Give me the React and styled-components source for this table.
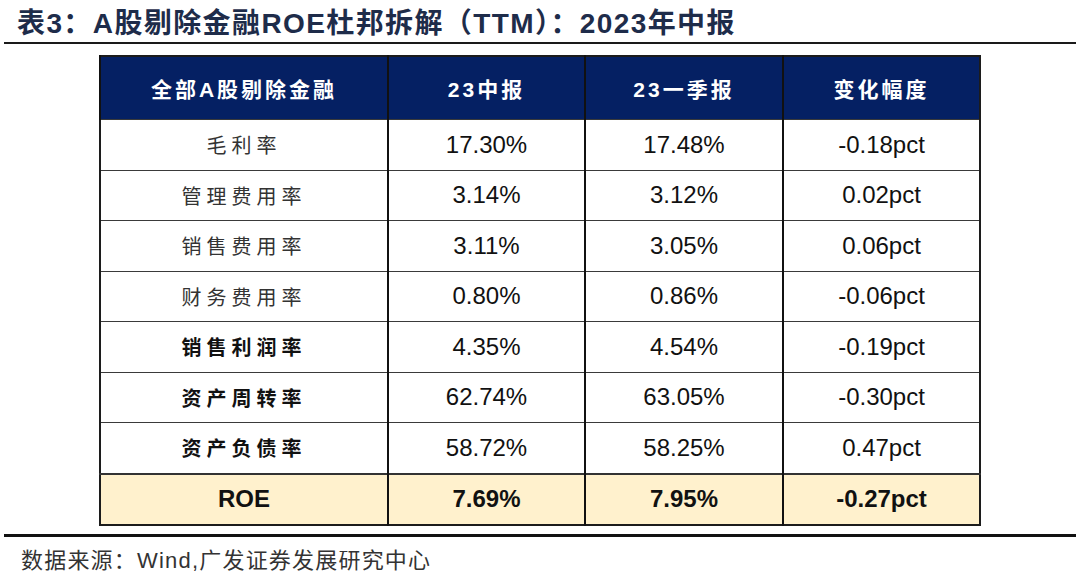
import React from "react";
import styled, { createGlobalStyle } from "styled-components";

const GlobalStyle = createGlobalStyle`
  html, body {
    margin: 0;
    padding: 0;
    background: #ffffff;
  }
  body {
    font-family: "Liberation Sans", "Noto Sans CJK SC", sans-serif;
  }
`;

const Page = styled.div`
  width: 1080px;
  height: 579px;
  display: flex;
  flex-direction: column;
  overflow: hidden;
`;

const Title = styled.div`
  height: 42px;
  padding-left: 17px;
  display: flex;
  align-items: center;
  font-family: "Liberation Sans", "Noto Sans CJK SC", sans-serif;
  font-size: 28px;
  font-weight: 700;
  color: #1e2c4a;
  letter-spacing: 1.4px;
  white-space: nowrap;
`;

const Rule = styled.div`
  margin: 0 4px;
  height: 2px;
  background: #1a1a1a;
`;

const TableWrap = styled.div`
  padding: 11px 0 0 99px;
`;

const Table = styled.table`
  border-collapse: collapse;
  width: 880px;
  table-layout: fixed;
  border: 2px solid #1c1c1c;
`;

const HeadCell = styled.th`
  height: 62px;
  padding: 0;
  background: #052063;
  color: #ffffff;
  font-family: "Liberation Sans", "Noto Sans CJK SC", sans-serif;
  font-size: 21px;
  font-weight: 700;
  letter-spacing: 3px;
  text-align: center;
  border-left: 2px solid #111;
`;

const Row = styled.tr`
  background: ${(p) => (p.$highlight ? "#fff1cd" : "#ffffff")};
  border-top: ${(p) => (p.$highlight ? "2px solid #333" : "1.5px solid #3a3a3a")};
`;

const Label = styled.td`
  height: 49.5px;
  padding: 0;
  text-align: center;
  font-family: "Noto Sans CJK SC", sans-serif;
  font-size: 20px;
  letter-spacing: 5px;
  font-weight: ${(p) => (p.$bold ? 700 : 400)};
  color: ${(p) => (p.$bold ? "#111" : "#333")};
`;

const Value = styled.td`
  height: 49.5px;
  padding: 0;
  text-align: center;
  font-family: "Liberation Sans", Arial, sans-serif;
  font-size: 24px;
  font-weight: ${(p) => (p.$bold ? 700 : 400)};
  color: #111;
  border-left: 2px solid #111;
`;

const RoeLabel = styled(Label)`
  font-family: "Liberation Sans", Arial, sans-serif;
  font-size: 24px;
  letter-spacing: 0;
`;

const Footer = styled.div`
  margin: 8px 4px 0;
  border-top: 3px solid #111;
  padding: 5px 0 0 17px;
  font-family: "Liberation Sans", "Noto Sans CJK SC", sans-serif;
  font-size: 22px;
  letter-spacing: 1.2px;
  color: #333;
  white-space: nowrap;
`;

const rows = [
  { name: "毛利率", a: "17.30%", b: "17.48%", c: "-0.18pct" },
  { name: "管理费用率", a: "3.14%", b: "3.12%", c: "0.02pct" },
  { name: "销售费用率", a: "3.11%", b: "3.05%", c: "0.06pct" },
  { name: "财务费用率", a: "0.80%", b: "0.86%", c: "-0.06pct" },
  { name: "销售利润率", a: "4.35%", b: "4.54%", c: "-0.19pct", bold: true },
  { name: "资产周转率", a: "62.74%", b: "63.05%", c: "-0.30pct", bold: true },
  { name: "资产负债率", a: "58.72%", b: "58.25%", c: "0.47pct", bold: true },
];

export default function App() {
  return (
    <Page>
      <GlobalStyle />
      <Title>表3：A股剔除金融ROE杜邦拆解（TTM）：2023年中报</Title>
      <Rule />
      <TableWrap>
        <Table>
          <colgroup>
            <col style={{ width: 288 }} />
            <col style={{ width: 197 }} />
            <col style={{ width: 198 }} />
            <col style={{ width: 197 }} />
          </colgroup>
          <thead>
            <tr>
              <HeadCell>全部A股剔除金融</HeadCell>
              <HeadCell>23中报</HeadCell>
              <HeadCell>23一季报</HeadCell>
              <HeadCell>变化幅度</HeadCell>
            </tr>
          </thead>
          <tbody>
            {rows.map((r) => (
              <Row key={r.name}>
                <Label $bold={r.bold}>{r.name}</Label>
                <Value>{r.a}</Value>
                <Value>{r.b}</Value>
                <Value>{r.c}</Value>
              </Row>
            ))}
            <Row $highlight>
              <RoeLabel $bold>ROE</RoeLabel>
              <Value $bold>7.69%</Value>
              <Value $bold>7.95%</Value>
              <Value $bold>-0.27pct</Value>
            </Row>
          </tbody>
        </Table>
      </TableWrap>
      <Footer>数据来源：Wind,广发证券发展研究中心</Footer>
    </Page>
  );
}
